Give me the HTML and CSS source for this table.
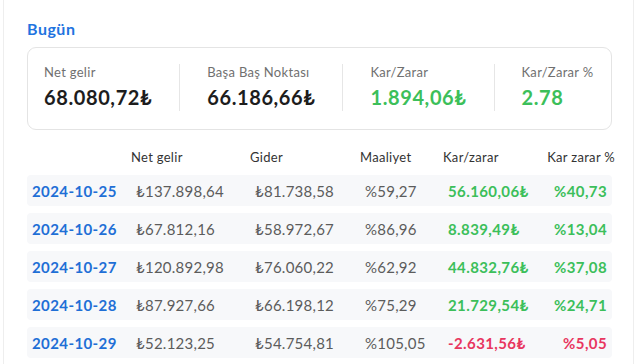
FILE: index.html
```html
<!DOCTYPE html>
<html lang="tr">
<head>
<meta charset="UTF-8">
<meta name="viewport" content="width=device-width, initial-scale=1.0">
<title>Bugün</title>
<link rel="stylesheet" href="styles.css">
</head>
<body>
  <div class="panel">
    <h2 class="panel-title">Bugün</h2>

    <div class="summary">
      <div class="summary-item">
        <div class="summary-label">Net gelir</div>
        <div class="summary-value">68.080,72₺</div>
      </div>
      <div class="summary-sep"></div>
      <div class="summary-item">
        <div class="summary-label">Başa Baş Noktası</div>
        <div class="summary-value">66.186,66₺</div>
      </div>
      <div class="summary-sep"></div>
      <div class="summary-item">
        <div class="summary-label">Kar/Zarar</div>
        <div class="summary-value positive">1.894,06₺</div>
      </div>
      <div class="summary-sep"></div>
      <div class="summary-item">
        <div class="summary-label">Kar/Zarar %</div>
        <div class="summary-value positive">2.78</div>
      </div>
    </div>

    <div class="daily">
      <div class="daily-head">
        <span></span>
        <span>Net gelir</span>
        <span>Gider</span>
        <span>Maaliyet</span>
        <span>Kar/zarar</span>
        <span class="pct">Kar zarar %</span>
      </div>
      <div id="daily-rows"></div>
    </div>
  </div>

  <script>
    let days = [
      { date: '2024-10-25', net: '₺137.898,64', cost: '₺81.738,58', ratio: '%59,27', profit: '56.160,06₺', pct: '%40,73', loss: false },
      { date: '2024-10-26', net: '₺67.812,16', cost: '₺58.972,67', ratio: '%86,96', profit: '8.839,49₺', pct: '%13,04', loss: false },
      { date: '2024-10-27', net: '₺120.892,98', cost: '₺76.060,22', ratio: '%62,92', profit: '44.832,76₺', pct: '%37,08', loss: false },
      { date: '2024-10-28', net: '₺87.927,66', cost: '₺66.198,12', ratio: '%75,29', profit: '21.729,54₺', pct: '%24,71', loss: false },
      { date: '2024-10-29', net: '₺52.123,25', cost: '₺54.754,81', ratio: '%105,05', profit: '-2.631,56₺', pct: '%5,05', loss: true }
    ];

    let rowsContainer = document.getElementById('daily-rows');

    days.forEach(function(day) {
      let row = document.createElement('div');
      row.classList.add('daily-row');
      let tone = day.loss ? 'negative' : 'positive';
      row.innerHTML = `
        <span class="date">${day.date}</span>
        <span>${day.net}</span>
        <span>${day.cost}</span>
        <span>${day.ratio}</span>
        <span class="strong ${tone}">${day.profit}</span>
        <span class="strong pct ${tone}">${day.pct}</span>
      `;
      rowsContainer.appendChild(row);
    });
  </script>
</body>
</html>
```

FILE: styles.css
```css
* {
  margin: 0;
  padding: 0;
  box-sizing: border-box;
}

body {
  font-family: 'Lato', 'DejaVu Sans', sans-serif;
  background-color: #fff;
  color: #222;
}

.panel {
  margin: 0 6px 0 3px;
  min-height: 100vh;
  border-left: 1px solid #eeeeee;
  border-right: 1px solid #eeeeee;
  padding: 20px 21px 0 23px;
}

.panel-title {
  font-size: 16px;
  line-height: 18px;
  font-weight: 700;
  letter-spacing: 0.5px;
  color: #1f74e0;
}

.summary {
  margin-top: 9px;
  display: flex;
  align-items: flex-start;
  gap: 27px;
  padding: 16px 8px 18px 16px;
  border: 1px solid #e4e4e4;
  border-radius: 9px;
  white-space: nowrap;
}

.summary-item {
  flex-shrink: 0;
}

.summary-label {
  font-size: 13px;
  line-height: 16px;
  letter-spacing: 0.3px;
  color: #707070;
}

.summary-value {
  margin-top: 5px;
  font-size: 20px;
  line-height: 24px;
  font-weight: 700;
  letter-spacing: 0.6px;
  color: #1d1d1d;
}

.summary-sep {
  flex-shrink: 0;
  width: 1px;
  height: 47px;
  background-color: #e6e6e6;
}

.positive {
  color: #3cbf5a;
}

.negative {
  color: #e8365f;
}

.daily {
  margin-top: 18px;
}

.daily-head,
.daily-row {
  display: grid;
  grid-template-columns: 104px 119px 110px 83px 95px 1fr;
  align-items: center;
}

.daily-head {
  margin-right: -3px;
  height: 18px;
  font-size: 13px;
  letter-spacing: 0.3px;
  color: #333;
}

.daily-row {
  margin-top: 7px;
  height: 31px;
  padding: 0 5px;
  background-color: #f7f8fa;
  border-radius: 4px;
  font-size: 15px;
  letter-spacing: 0.25px;
  color: #5c5c5c;
}

.daily-head + #daily-rows .daily-row:first-child {
  margin-top: 9px;
}

.daily-row .date {
  font-weight: 700;
  letter-spacing: 0.4px;
  color: #1f6fd6;
}

.daily-row .strong {
  font-weight: 700;
  letter-spacing: 0.4px;
}

.pct {
  text-align: right;
}
```
